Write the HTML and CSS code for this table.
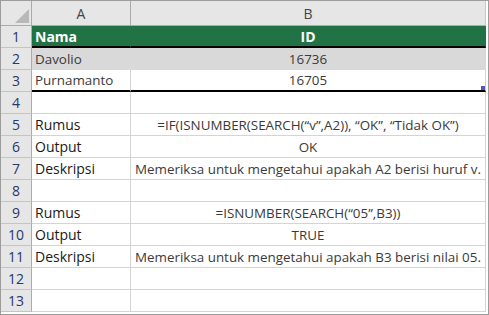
FILE: index.html
```html
<!DOCTYPE html>
<html>
<head>
<meta charset="utf-8">
<link rel="stylesheet" href="styles.css">
</head>
<body>
<div class="sheet">
  <div class="corner"><span class="tri"></span></div>
  <div class="colhead">A</div>
  <div class="colhead last">B</div>

  <div class="rn">1</div>
  <div class="c head left thick">Nama</div>
  <div class="c head center thick">ID</div>

  <div class="rn">2</div>
  <div class="c shade left">Davolio</div>
  <div class="c shade center">16736</div>

  <div class="rn">3</div>
  <div class="c left thick">Purnamanto</div>
  <div class="c center thick handle">16705</div>

  <div class="rn">4</div>
  <div class="c"></div>
  <div class="c"></div>

  <div class="rn">5</div>
  <div class="c left label">Rumus</div>
  <div class="c center">=IF(ISNUMBER(SEARCH(“v”,A2)), “OK”, “Tidak OK”)</div>

  <div class="rn">6</div>
  <div class="c left label">Output</div>
  <div class="c center">OK</div>

  <div class="rn">7</div>
  <div class="c left label">Deskripsi</div>
  <div class="c center">Memeriksa untuk mengetahui apakah A2 berisi huruf v.</div>

  <div class="rn">8</div>
  <div class="c"></div>
  <div class="c"></div>

  <div class="rn">9</div>
  <div class="c left label">Rumus</div>
  <div class="c center">=ISNUMBER(SEARCH(“05”,B3))</div>

  <div class="rn">10</div>
  <div class="c left label">Output</div>
  <div class="c center">TRUE</div>

  <div class="rn">11</div>
  <div class="c left label">Deskripsi</div>
  <div class="c center">Memeriksa untuk mengetahui apakah B3 berisi nilai 05.</div>

  <div class="rn">12</div>
  <div class="c"></div>
  <div class="c"></div>

  <div class="rn">13</div>
  <div class="c"></div>
  <div class="c"></div>
</div>
</body>
</html>
```
FILE: styles.css
```css
html, body {
  margin: 0;
  padding: 0;
  background: #ffffff;
}
.sheet {
  width: 489px;
  height: 315px;
  box-sizing: border-box;
  border: 1px solid #9c9c9c;
  padding: 0 2px 2px 0;
  display: grid;
  grid-template-columns: 31px 99px 355px;
  grid-template-rows: 25px repeat(13, 22px);
  font-family: "Open Sans", "Noto Sans", sans-serif;
  font-size: 13.4px;
  color: #262626;
  background: #ffffff;
}
.sheet > div {
  box-sizing: border-box;
  overflow: hidden;
  white-space: nowrap;
}
.corner {
  background: #e6e6e6;
  border-right: 1px solid #ababab;
  border-bottom: 1px solid #ababab;
  position: relative;
}
.tri {
  position: absolute;
  right: 2px;
  bottom: 2px;
  width: 14px;
  height: 14px;
  background: #b8b8b8;
  clip-path: polygon(100% 0, 100% 100%, 0 100%);
}
.colhead {
  background: #e6e6e6;
  border-right: 1px solid #ababab;
  border-bottom: 1px solid #ababab;
  display: flex;
  align-items: center;
  justify-content: center;
  color: #444444;
  font-size: 14px;
  padding-top: 1px;
}
.colhead.last {
  border-right: 1px solid #c8c8c8;
}
.rn {
  background: #e6e6e6;
  border-right: 1px solid #ababab;
  border-bottom: 1px solid #c4c4c4;
  display: flex;
  align-items: center;
  justify-content: center;
  color: #27386b;
  font-size: 14px;
}
.c {
  border-right: 1px solid #d4d4d4;
  border-bottom: 1px solid #d4d4d4;
  display: flex;
  align-items: center;
  color: #3a3a3a;
}
.left {
  padding-left: 3px;
  justify-content: flex-start;
}
.center {
  justify-content: center;
}
.label {
  color: #1a1a1a;
  font-size: 14px;
}
.head {
  background: #217346;
  color: #ffffff;
  font-weight: 700;
  font-size: 14px;
  border-right-color: #217346;
}
.shade {
  background: #d9d9d9;
  border-right-color: #d9d9d9;
  border-bottom-color: #d9d9d9;
}
.thick {
  border-bottom: 2px solid #000000;
}
.handle {
  position: relative;
}
.handle::after {
  content: "";
  position: absolute;
  right: 0;
  bottom: 0;
  width: 4px;
  height: 4px;
  background: #4a5bbf;
}
```
